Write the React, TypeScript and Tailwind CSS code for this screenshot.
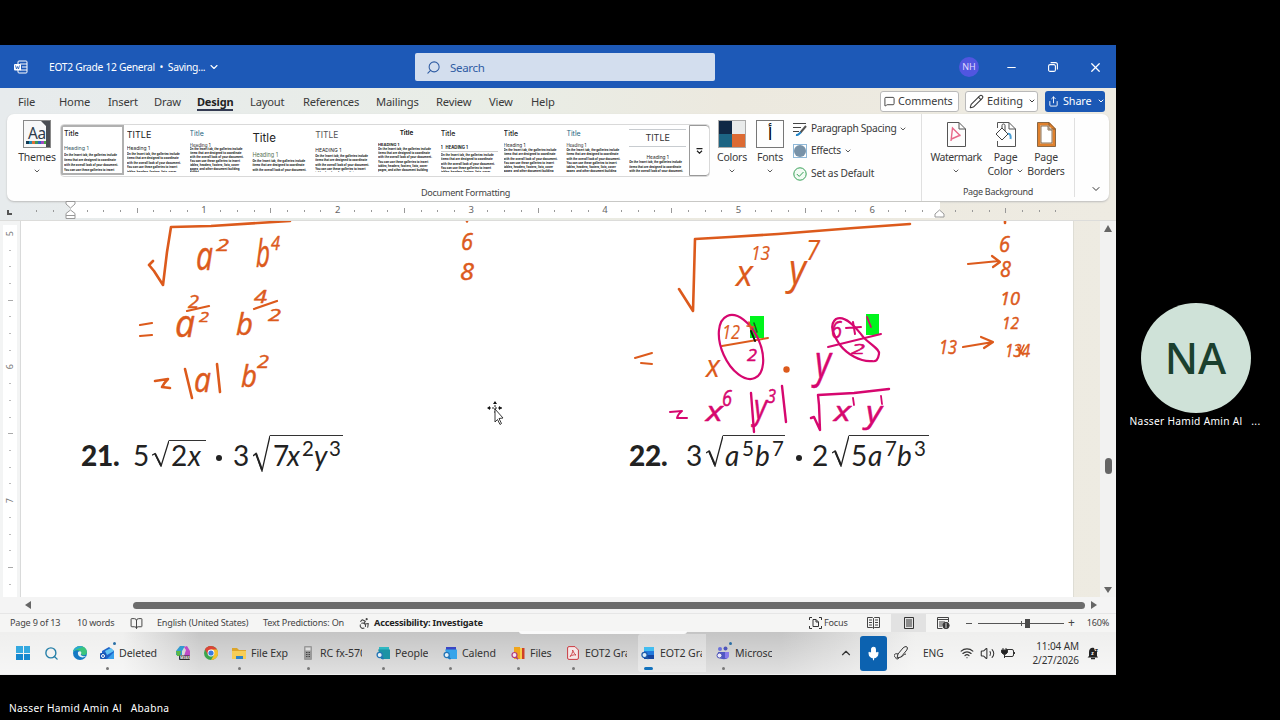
import { ReactNode } from "react"
import {
  Accessibility,
  BookOpen,
  ChevronDown,
  ChevronUp,
  MessageSquare,
  Mic,
  Minus,
  Pencil,
  Search,
  Share,
  Volume2,
  Wifi,
  X,
} from "lucide-react"

const ORANGE = "#dc5a1c"
const PINK = "#d6076f"

const tabs = [
  { label: "File", width: "w-[41px]" },
  { label: "Home", width: "w-[49px]" },
  { label: "Insert", width: "w-[46px]" },
  { label: "Draw", width: "w-[43px]" },
  { label: "Design", width: "w-[53px]" },
  { label: "Layout", width: "w-[53px]" },
  { label: "References", width: "w-[73px]" },
  { label: "Mailings", width: "w-[60px]" },
  { label: "Review", width: "w-[53px]" },
  { label: "View", width: "w-[42px]" },
  { label: "Help", width: "w-[40px]" },
]

const body =
  "On the Insert tab, the galleries include items that are designed to coordinate with the overall look of your document. You can use these galleries to insert tables, headers, footers, lists, cover pages, and other document building blocks."

const styleSets = [
  { title: "Title", titleClass: "text-[7px] font-medium leading-[10px]", heading: "Heading 1", headingClass: "mt-[6px] text-[5.3px] leading-[6px] text-[#35565e]", bodyClass: "mt-[2px] leading-[4.9px]" },
  { title: "TITLE", titleClass: "text-[9px] leading-[11px]", heading: "Heading 1", headingClass: "mt-[6px] text-[5px] leading-[5px]", bodyClass: "mt-px leading-[4.4px]" },
  { title: "Title", titleClass: "text-[7px] leading-[10px] text-[#246580]", heading: "Heading 1", headingClass: "mt-[4px] text-[4.5px] leading-[5px]", bodyClass: "leading-[3.9px]" },
  { title: "Title", titleClass: "mt-[2px] text-[11.5px] leading-[14px]", heading: "Heading 1", headingClass: "mt-[7px] text-[5.5px] leading-[6px] text-[#557050]", bodyClass: "mt-[1px] leading-[4.4px]" },
  { title: "TITLE", titleClass: "mt-px text-[8.5px] leading-[11px] text-[#555]", heading: "HEADING 1", headingClass: "mt-[6px] text-[5px] leading-[6px]", bodyClass: "mt-px leading-[4.3px]" },
  { title: "Title", titleClass: "text-center text-[6.3px] font-bold leading-[9px]", heading: "HEADING 1", headingClass: "mt-[4px] text-[4px] font-bold leading-[5px]", bodyClass: "leading-[4.2px]" },
  { title: "Title", titleClass: "text-[7px] font-medium leading-[10px]", heading: "1   HEADING 1", headingClass: "mt-[5px] border-b border-[#ccc] whitespace-pre text-[4.2px] font-bold leading-[7px]", bodyClass: "mt-px leading-[4.3px]" },
  { title: "Title", titleClass: "text-[7px] font-medium leading-[10px]", heading: "Heading 1", headingClass: "mt-[4px] text-[4.7px] leading-[5px]", bodyClass: "leading-[4.3px]" },
  { title: "Title", titleClass: "text-[7px] leading-[10px] text-[#246580]", heading: "Heading 1", headingClass: "mt-[4px] text-[4.3px] leading-[5px]", bodyClass: "leading-[4.3px]" },
  { title: "TITLE", titleClass: "border-y border-[#c8ccd0] text-center text-[9px] leading-[16px] text-[#333]", heading: "Heading 1", headingClass: "mt-[7px] text-center text-[4.8px] leading-[6px]", bodyClass: "leading-[4.6px]" },
]

function TitleBar() {
  return (
    <div className="flex h-[43px] items-center bg-[#1d59b7] pt-px text-white">
      <svg className="ml-3.5" width="14" height="14" viewBox="0 0 14 14" fill="none" stroke="white">
        <path d="M4 4V2a1 1 0 0 1 1-1h7a1 1 0 0 1 1 1v10a1 1 0 0 1-1 1H5a1 1 0 0 1-1-1v-2M6 4h7M8 7h5M6 10h7" />
        <rect x="0" y="4" width="7" height="6.500" rx="1" fill="white" stroke="none" />
        <path d="M1.500 5.500l1 3.500 1-2.500 1 2.500 1-3.500" stroke="#1d59b7" strokeWidth="0.800" />
      </svg>
      <span className="ml-[21px] w-[156px] shrink-0 whitespace-pre pt-[2px] text-[10.3px] tracking-[-0.31px]">EOT2 Grade 12 General  •  Saving...</span>
      <ChevronDown className="ml-[3px] size-3 shrink-0" strokeWidth={2.2} />
      <div className="ml-[195px] flex h-7 w-[300px] items-center rounded-[2px] bg-[#d3deee] text-[#2f5ca3]">
        <Search className="ml-[11px] size-[15px] -scale-x-100" strokeWidth={1.7} />
        <span className="ml-[9px] pt-px text-[11.5px] tracking-[-0.3px]">Search</span>
      </div>
      <div className="ml-[244px] flex size-5 items-center justify-center rounded-full bg-[#5156e0] text-[9px] text-[#e0dcff]">NH</div>
      <Minus className="ml-[26px] size-[13px]" strokeWidth={2} />
      <svg className="ml-[30px]" width="10" height="10" viewBox="0 0 10 10" fill="none" stroke="white" strokeWidth="1.100">
        <rect x="0.600" y="2.600" width="6.800" height="6.800" rx="1.500" />
        <path d="M2.600 0.600h4.800a2 2 0 0 1 2 2v4.800" />
      </svg>
      <X className="ml-[30px] size-[15px]" strokeWidth={2} />
    </div>
  )
}

function TabRow() {
  return (
    <div className="flex h-[26px] items-center pl-[18px] text-[#3a3a3a]">
      {tabs.map((tab) => (
        <div key={tab.label} className={`${tab.width} pt-[2px] text-[11.2px] tracking-[-0.2px]`}>
          <span
            className={
              tab.label === "Design"
                ? "inline-block border-b-2 border-[#333a52] text-[11px] font-bold leading-[15px] tracking-[-0.2px] text-[#222]"
                : "inline-block border-b-2 border-transparent leading-[15px]"
            }
          >
            {tab.label}
          </span>
        </div>
      ))}
      <div className="ml-[309px] flex h-[21px] w-[79px] items-center rounded-[3px] border border-[#b9b9b9] bg-white pl-[3px] text-[10.8px]">
        <MessageSquare className="size-[11px]" />
        <span className="ml-[3px] tracking-[-0.1px]">Comments</span>
      </div>
      <div className="ml-[6px] flex h-[21px] w-[73px] items-center rounded-[3px] border border-[#b9b9b9] bg-white pl-[3px] text-[11px]">
        <Pencil className="size-[15px]" strokeWidth={1.7} />
        <span className="ml-[3px]">Editing</span>
        <ChevronDown className="ml-[5px] size-2" strokeWidth={3} />
      </div>
      <div className="ml-[7px] flex h-[21px] w-[60px] items-center rounded-[3px] bg-[#1b58b5] pl-[3px] text-[10.8px] text-white">
        <Share className="size-[11px]" />
        <span className="ml-[4px] tracking-[-0.1px]">Share</span>
        <ChevronDown className="ml-[5px] size-2" strokeWidth={3} />
      </div>
    </div>
  )
}

function Gallery() {
  return (
    <div className="mt-[10px] flex h-[53px] w-[650px] overflow-hidden rounded-[4px] border border-[#d9d9d9] bg-white">
      {styleSets.map((s, i) => (
        <div
          key={i}
          className={`h-[50px] w-[62.8px] shrink-0 overflow-hidden px-[3px] pt-[4px] text-[#222] ${
            i === 0 ? "outline-2 -outline-offset-2 outline-[#b0b0b0]" : ""
          } ${i === 9 ? "w-[60px]" : ""}`}
        >
          <div className="h-[43px] w-[57px] overflow-hidden font-[Inter,sans-serif]">
            <div className={s.titleClass}>{s.title}</div>
            <div className={s.headingClass}>{s.heading}</div>
            <div className={`w-[57px] font-[Roboto,sans-serif] text-[3.1px] font-bold ${s.bodyClass}`}>{body}</div>
          </div>
        </div>
      ))}
      <div className="ml-auto flex w-[21px] shrink-0 flex-col items-center justify-center rounded-r-[4px] border border-[#999] bg-white">
        <svg width="7" height="6" viewBox="0 0 7 6" fill="none" stroke="#222" strokeWidth="1.200">
          <path d="M0.500 0.700h6M1 2.800l2.500 2.400L6 2.800" />
        </svg>
      </div>
    </div>
  )
}

function BigButton({ label, sub, chevron, className, children }: { label: string; sub?: string; chevron?: boolean; className: string; children: ReactNode }) {
  return (
    <div className={`flex shrink-0 flex-col items-center text-[10.5px] leading-[14px] tracking-[-0.25px] text-[#3a3a3a] ${className}`}>
      <div className="flex h-[30px] items-center">{children}</div>
      <span className="mt-px">{label}</span>
      <span className="flex h-[14px] items-center gap-[3px]">
        {sub}
        {chevron && <ChevronDown className="size-2" strokeWidth={2.5} />}
      </span>
    </div>
  )
}

function Ribbon() {
  return (
    <div className="relative mx-[7px] flex h-[87px] rounded-[7px] bg-[#fefefe] shadow-[0_1px_2px_#bbb]">
      <BigButton label="Themes" chevron className="ml-[10px] w-[40px] pt-[5px]">
        <svg width="28" height="28" viewBox="0 0 28 28">
          <rect x="0.500" y="0.500" width="27" height="27" fill="#f8f8f8" stroke="#888" />
          <path d="M18 1h9v26h-4V6z" fill="#4a4d52" />
          <text x="5" y="19" fontSize="17" fill="#2d3b4a" textLength="18" lengthAdjust="spacingAndGlyphs">Aa</text>
          <path d="M3 22.500h3" stroke="#123a55" strokeWidth="3" />
          <path d="M6 22.500h3" stroke="#1f8ab0" strokeWidth="3" />
          <path d="M9 22.500h3" stroke="#dd7036" strokeWidth="3" />
          <path d="M12 22.500h3" stroke="#39965c" strokeWidth="3" />
          <path d="M15 22.500h3" stroke="#2f62c0" strokeWidth="3" />
          <path d="M18 22.500h3" stroke="#a04ac0" strokeWidth="3" />
          <path d="M21 22.500h2" stroke="#44a844" strokeWidth="3" />
        </svg>
      </BigButton>
      <div className="ml-[3px] w-[650px]">
        <Gallery />
        <div className="ml-[361px] mt-[10px] text-[9.1px] leading-[12px] tracking-[-0.3px] text-[#444]">Document Formatting</div>
      </div>
      <BigButton label="Colors" chevron className="ml-[4px] w-[36px] pt-[5px]">
        <div className="grid size-7 grid-cols-2 border border-[#aaa]">
          <div className="bg-[#102845]" />
          <div className="bg-[#e9ebeb]" />
          <div className="bg-[#1c6483]" />
          <div className="bg-[#dc6a33]" />
        </div>
      </BigButton>
      <BigButton label="Fonts" chevron className="ml-[3px] w-[34px] pt-[5px]">
        <div className="flex size-7 items-center justify-center border border-[#777] font-['DejaVu_Sans',sans-serif] text-[17px] text-black">أ</div>
      </BigButton>
      <div className="ml-[6px] flex w-[128px] flex-col pt-[3px] text-[10.2px] tracking-[-0.3px] text-[#3a3a3a]">
        <div className="flex h-[23px] items-center">
          <svg width="14" height="14" viewBox="0 0 14 14" fill="none">
            <path d="M0 1.500h13M0 5.500h8M0 9.500h6" stroke="#444" strokeWidth="1.100" />
            <path d="M13 4L7.500 10.500" stroke="#555" strokeWidth="2" />
            <path d="M3 13c3 .5 3-2 5-2.500" stroke="#2083c5" strokeWidth="2" />
          </svg>
          <span className="ml-[4px]">Paragraph Spacing</span>
          <ChevronDown className="ml-[3px] size-2" strokeWidth={2.5} />
        </div>
        <div className="flex h-[22px] items-center">
          <div className="flex size-[14px] items-center justify-center border border-[#8fb8d8]">
            <div className="size-3 rounded-full bg-[#7892a8]" />
          </div>
          <span className="ml-[4px]">Effects</span>
          <ChevronDown className="ml-[3px] size-2" strokeWidth={2.5} />
        </div>
        <div className="flex h-[23px] items-center">
          <svg width="14" height="14" viewBox="0 0 14 14" fill="none" stroke="#37a058">
            <circle cx="7" cy="7" r="6.200" fill="#f2fbf4" />
            <path d="M3.800 7l2.400 2.400L10.500 5" />
          </svg>
          <span className="ml-[4px] tracking-[-0.2px]">Set as Default</span>
        </div>
      </div>
      <div className="flex w-[153px] flex-col border-l border-[#e0e0e0]">
        <div className="flex pl-[8px] pt-[5px]">
          <BigButton label="Watermark" chevron className="w-[52px] tracking-[-0.45px]">
            <svg width="19" height="25" viewBox="0 0 19 25" fill="none">
              <path d="M.5.5H12L18.500 7v17.500H.5zM12 .5V7h6.500" stroke="#555" fill="#fdfdfd" />
              <path d="M4 19L5.500 6l8 8M4.500 17l9-4" stroke="#e8698a" strokeWidth="1.400" />
            </svg>
          </BigButton>
          <BigButton label="Page" sub="Color" chevron className="w-[47px]">
            <svg width="21" height="25" viewBox="0 0 21 25" fill="none">
              <path d="M2.500 6V.5H14L20.500 7v17.500h-18V19M14 .5V7h6.500" stroke="#555" />
              <path d="M7 6l6 6-6 6-6-6zM7 6V3.500c0-2 3-2 3 0V9" stroke="#444" fill="#fff" />
              <path d="M13 12c2.500-1 3 3 2.500 5" stroke="#4b9fd6" strokeWidth="2" />
            </svg>
          </BigButton>
          <BigButton label="Page" sub="Borders" className="w-[34px]">
            <svg width="19" height="25" viewBox="0 0 19 25" fill="none">
              <path d="M2 2h10l5 5v16H2z" stroke="#e0812d" strokeWidth="3" fill="white" />
              <path d="M.5.5H12L18.500 7v17.500H.5zM12 .5V7h6.500M4 4h7v4h4v13H4z" stroke="#705030" strokeWidth="0.800" />
            </svg>
          </BigButton>
        </div>
        <div className="mt-[8px] text-center text-[9px] leading-[12px] tracking-[-0.3px] text-[#444]">Page Background</div>
      </div>
      <div className="mb-1 mt-1 border-l border-[#e0e0e0]" />
      <ChevronDown className="absolute bottom-[6px] right-[7px] size-3 text-[#333]" strokeWidth={2} />
    </div>
  )
}

function Marker({ className }: { className: string }) {
  return (
    <svg className={`absolute ${className}`} width="11" height="18" viewBox="0 0 11 18" fill="white" stroke="#999">
      <path d="M1 .5h9V3L5.500 7 1 3z" />
      <path d="M5.500 9L10 12.500V17.500H1v-5zM1 14.500h9" />
    </svg>
  )
}

function Ruler() {
  const ticks = Array.from({ length: 62 }, (_, i) => i - 2)
  return (
    <div className="relative flex h-[19px] pt-[1px]">
      <div className="flex w-[28.6px] shrink-0 items-center pl-[7px]">
        <div className="mt-[2px] size-[5px] border-b-2 border-l-2 border-[#555]" />
      </div>
      <div className="relative flex h-4 bg-[linear-gradient(90deg,transparent_42px,#fff_42px,#fff_911px,transparent_911px)]">
        {ticks.map((k) => (
          <div key={k} className="flex w-[16.71px] shrink-0 items-center justify-center pt-px text-[9.5px] text-[#666]">
            {k > 0 && k % 8 === 0 && k < 56 ? (
              k / 8
            ) : k === 0 || k === 52 ? null : (
              <div className={k % 4 === 0 ? "h-[5px] w-px bg-[#999]" : "h-[2px] w-px bg-[#999]"} />
            )}
          </div>
        ))}
      </div>
      <Marker className="left-[65px] top-0" />
      <svg className="absolute left-[934px] top-[8px]" width="11" height="10" viewBox="0 0 11 10" fill="white" stroke="#999">
        <path d="M5.500 1L10 5v3H1V5z" />
      </svg>
    </div>
  )
}

function VerticalRuler() {
  const ticks = Array.from({ length: 22 }, (_, i) => i + 1)
  return (
    <div className="flex w-[21px] shrink-0 flex-col items-center overflow-hidden border-r border-[#d9dada] bg-[#f3f4f4] pt-[4px]">
      {[0, ...ticks].map((k) => (
        <div key={k} className="flex h-[16.71px] w-[14px] shrink-0 items-center justify-center bg-white text-[9px] text-[#777]">
          {k % 8 === 0 ? (
            <span className="-rotate-90">{5 + k / 8}</span>
          ) : (
            <div className={k % 4 === 0 ? "h-px w-[5px] bg-[#aaa]" : "h-px w-[2px] bg-[#bbb]"} />
          )}
        </div>
      ))}
    </div>
  )
}

// One pen character. x/y is the lower left corner of its box, w/h its size.
function Pen({ t, x, y, w, h, c = ORANGE, thin }: { t: string; x: number; y: number; w: number; h: number; c?: string; thin?: boolean }) {
  const ratio = t === "b" || t === "y" ? 0.77 : t === "a" || t === "x" ? 0.545 : 0.72
  const size = h / ratio
  return (
    <text
      x={x}
      y={t === "y" ? y - size * 0.23 : y}
      fontSize={size}
      fontStyle="italic"
      fill={c}
      stroke={c}
      strokeWidth={thin ? 0.2 : 0.5}
      textLength={w}
      lengthAdjust="spacingAndGlyphs"
    >
      {t}
    </text>
  )
}

function Ink() {
  return (
    <svg
      className="absolute inset-0 font-['Open_Sans',sans-serif]"
      width="1100"
      height="376"
      viewBox="0 221 1100 376"
      fill="none"
      strokeLinecap="round"
      strokeLinejoin="round"
    >
      <rect x="750" y="316" width="14" height="22" fill="#00f51c" />
      <rect x="866" y="314" width="13" height="21" fill="#00f51c" />
      <g stroke={ORANGE} strokeWidth="2.600">
        <path d="M153 261l-4 4 5 6 9 14 4-33 4-25 40-1 79-5" />
        <path d="M140 325l12-2M140 336l12-1M187 311l22-5M254 309l23-8" strokeWidth="2.200" />
        <path d="M155 381l13-2q-4 4-6 8l8 1M185 369l7 29M217 364l3 28" />
        <path d="M679 289l14 22 1-35 1-37 35-2 48-3 76-6 56-4" />
        <path d="M635 358l17-5M641 363l11 1M722 346l46-8" strokeWidth="2" />
        <path d="M968 264l31-3M992 256l8 6-7 5M963 347l30-5M981 337l12 5-9 6" strokeWidth="2.200" />
        <path d="M1005 221v2M467 221v.5" />
        <path d="M1018 347l5 8M1019 356l5-11" strokeWidth="1.600" />
      </g>
      <circle cx="786.500" cy="369.500" r="3.200" fill={ORANGE} />

      <Pen t="a" x={196} y={270} w={17} h={22} />
      <Pen t="2" x={216} y={251} w={13} h={12} />
      <Pen t="b" x={256} y={267} w={14} h={29} />
      <Pen t="4" x={271} y={250} w={9} h={14} />
      <Pen t="a" x={175} y={337} w={20} h={21} />
      <Pen t="2" x={188} y={308} w={11} h={13} />
      <Pen t="2" x={199} y={322} w={10} h={11} />
      <Pen t="b" x={236} y={335} w={17} h={24} />
      <Pen t="4" x={254} y={303} w={13} h={13} />
      <Pen t="2" x={268} y={321} w={13} h={12} />
      <Pen t="a" x={194} y={392} w={17} h={19} />
      <Pen t="b" x={241} y={387} w={16} h={24} />
      <Pen t="2" x={257} y={368} w={12} h={13} />
      <Pen t="6" x={461} y={250} w={12} h={17} />
      <Pen t="8" x={460} y={280} w={14} h={17} />

      <Pen t="x" x={736} y={286} w={17} h={20} thin />
      <Pen t="13" x={751} y={260} w={19} h={15} thin />
      <Pen t="y" x={789} y={294} w={17} h={32} thin />
      <Pen t="7" x={806} y={260} w={14} h={19} thin />
      <Pen t="x" x={706} y={377} w={14} h={17} thin />
      <Pen t="12" x={722} y={339} w={18} h={15} thin />
      <Pen t="6" x={999} y={252} w={11} h={16} />
      <Pen t="8" x={1000} y={277} w={11} h={16} />
      <Pen t="10" x={1000} y={305} w={20} h={13} />
      <Pen t="12" x={1002} y={329} w={17} h={12} />
      <Pen t="13" x={939} y={354} w={18} h={14} />
      <Pen t="134" x={1005} y={357} w={25} h={13} />

      <g stroke={PINK} strokeWidth="2.400">
        <ellipse cx="741" cy="347" rx="19" ry="34" transform="rotate(-24 741 347)" strokeWidth="2.200" />
        <path d="M836 319c9-4 19 7 28 19 10 9 16 12 15 16-1 6-3 8-7 7-12 1-25-7-32-16-6-9-12-20-4-26z" strokeWidth="2.200" />
        <path d="M828 347l53-13M846 328l15-1M853 322l2 12" strokeWidth="2" />
        <path d="M670 412l12-1q-4 3-5 7l10 0" strokeWidth="2" />
        <path d="M751 393l3 39M782 386l4 36M811 418l3-1 6 13-1-25-1-10 36-2 35-4" />
        <path d="M853 398l1 7M881 396l1 8M867 317l4 10" strokeWidth="1.800" />
      </g>
      <path d="M754 323l3 9" stroke="#17641b" strokeWidth="1.600" />
      <path d="M747 326l7 1M749 322l2 8" stroke={ORANGE} strokeWidth="1.600" />
      <path d="M751 331l4 10" stroke="#181010" strokeWidth="2" />

      <Pen t="2" x={747} y={361} w={10} h={12} c={PINK} />
      <Pen t="y" x={815} y={387} w={16} h={34} c={PINK} />
      <Pen t="6" x={831} y={338} w={11} h={17} c={PINK} />
      <Pen t="2" x={851} y={354} w={14} h={11} c={PINK} />
      <Pen t="x" x={706} y={421} w={17} h={15} c={PINK} />
      <Pen t="6" x={722} y={406} w={10} h={16} c={PINK} />
      <Pen t="y" x={754} y={427} w={13} h={26} c={PINK} />
      <Pen t="3" x={767} y={403} w={9} h={14} c={PINK} />
      <Pen t="x" x={834} y={421} w={17} h={15} c={PINK} />
      <Pen t="y" x={866} y={430} w={16} h={24} c={PINK} />
    </svg>
  )
}

function Root({ sign, bar, children }: { sign: string; bar: string; children: ReactNode }) {
  return (
    <div className={`flex shrink-0 ${sign}`}>
      <svg className="h-full w-[17px] shrink-0" viewBox="0 0 17 32" preserveAspectRatio="none" fill="none" stroke="#222">
        <path d="M0 18l3-2 6 15L17 .7" strokeWidth="1.300" />
        <path d="M3 16l6 14" strokeWidth="2" />
      </svg>
      <div className={`flex items-baseline overflow-visible border-t-[1.5px] border-[#333] ${bar}`}>{children}</div>
    </div>
  )
}

function Sup({ children, className }: { children: ReactNode; className: string }) {
  return <span className={`relative -top-[10px] shrink-0 text-[20.5px] not-italic ${className}`}>{children}</span>
}

function Equations() {
  return (
    <div className="flex h-[44px] pl-[60px] pt-px font-[Lato,sans-serif] text-[28px] leading-[42px] text-[#222]">
      <div className="flex w-[548px] items-start">
        <b className="w-[52px] shrink-0 font-black tracking-[-0.3px]">21.</b>
        <span className="w-[19px] shrink-0">5</span>
        <Root sign="mt-[6px] h-[27px]" bar="w-[37px] leading-[28px] pl-[2px]">
          <span className="w-[17px]">2</span>
          <i>x</i>
        </Root>
        <span className="ml-[10px] mt-[21px] size-[6px] shrink-0 rounded-full bg-[#222]" />
        <span className="ml-[11px] w-[20px] shrink-0">3</span>
        <Root sign="mt-px h-[37px]" bar="w-[73px] leading-[38px] pl-[3px]">
          <span className="w-[14px]">7</span>
          <i className="w-[15px]">x</i>
          <Sup className="w-[12px]">2</Sup>
          <i className="w-[15px]">y</i>
          <Sup className="w-[12px]">3</Sup>
        </Root>
      </div>
      <div className="flex items-start">
        <b className="w-[57px] shrink-0 font-black tracking-[-0.3px]">22.</b>
        <span className="w-[20px] shrink-0">3</span>
        <Root sign="mt-px h-[32px]" bar="w-[62px] leading-[38px] pl-[2px]">
          <i className="w-[17px]">a</i>
          <Sup className="w-[13px]">5</Sup>
          <i className="w-[17px]">b</i>
          <Sup className="w-[12px]">7</Sup>
        </Root>
        <span className="ml-[11px] mt-[21px] size-[6px] shrink-0 rounded-full bg-[#222]" />
        <span className="ml-[10px] w-[20px] shrink-0">2</span>
        <Root sign="mt-px h-[32px]" bar="w-[80px] leading-[38px] pl-[2px]">
          <span className="w-[17px]">5</span>
          <i className="w-[17px]">a</i>
          <Sup className="w-[12px]">7</Sup>
          <i className="w-[17px]">b</i>
          <Sup className="w-[12px]">3</Sup>
        </Root>
      </div>
    </div>
  )
}

function Document() {
  return (
    <div className="relative flex h-[377px] border-t border-[#dcdcda]">
      <VerticalRuler />
      <div className="w-[1053px] shrink-0 border-r border-[#deddd5] bg-white pt-[212px]">
        <Equations />
      </div>
      <div className="flex-1" />
      <div className="flex w-[16px] flex-col items-center justify-between bg-[#f2f2f1] py-[4px]">
        <div className="border-x-4 border-b-[7px] border-transparent border-b-[#666]" />
        <div className="mt-[112px] h-[16px] w-[7px] rounded-full bg-[#666]" />
        <div className="border-x-4 border-t-[6px] border-transparent border-t-[#666]" />
      </div>
      <Ink />
      <svg className="absolute left-[487px] top-[180px]" width="18" height="25" viewBox="0 0 18 25" fill="none" stroke="#222">
        <path d="M8 1v12M2 7h13" strokeDasharray="2 1" />
        <path d="M8 0l2 3H6zM0 7l3-2v4zM15 7l-3-2v4z" fill="#111" stroke="none" />
        <path d="M8 8l8 9-4 .5 2.500 5-1.500 1-2.500-5L8 21z" fill="white" strokeWidth="0.900" />
      </svg>
    </div>
  )
}

function StatusBar() {
  return (
    <div className="flex h-[19px] items-center whitespace-nowrap border-t border-[#e6e6e6] bg-[#f5f5f4] pl-[10px] text-[9.1px] tracking-[-0.2px] text-[#444]">
      <span className="w-[67px]">Page 9 of 13</span>
      <span className="w-[53px]">10 words</span>
      <BookOpen className="size-[13px]" strokeWidth={1.8} />
      <span className="ml-[14px] w-[106px]">English (United States)</span>
      <span className="w-[95px]">Text Predictions: On</span>
      <Accessibility className="size-[13px]" strokeWidth={2} />
      <span className="ml-[3px] w-[435px] text-[9.2px] font-bold text-[#222]">Accessibility: Investigate</span>
      <svg width="13" height="12" viewBox="0 0 13 12" fill="none" stroke="#333">
        <path d="M3 .5H.5V3M10 .5h2.500V3M3 11.500H.5V9M10 11.500h2.500V9M4 2.500h3L9.500 5v4.500H4zM7 2.500V5h2.500" />
      </svg>
      <span className="ml-[2px] w-[43px]">Focus</span>
      <svg width="13" height="12" viewBox="0 0 13 12" fill="none" stroke="#444">
        <path d="M6.500 1.500v10M.5.5h5l1 1 1-1h5v10h-5l-1 1-1-1h-5zM2 3h3M2 5.500h3M2 8h3M8 3h3M8 5.500h3M8 8h3" />
      </svg>
      <div className="ml-[11px] flex h-[18px] w-[35px] items-center justify-center bg-[#e2e2e2]">
        <svg width="10" height="12" viewBox="0 0 10 12" fill="none" stroke="#333">
          <path d="M.5.5h9v11h-9zM2 3h6M2 5h6M2 7h6M2 9h6" />
        </svg>
      </div>
      <svg className="ml-[11px]" width="13" height="12" viewBox="0 0 13 12" fill="none" stroke="#444">
        <path d="M11.500 5V.5H.5v11h5M.5 2.500h11M2 5h6M2 7h4M2 9h3" />
        <circle cx="9" cy="8.500" r="3.200" fill="#333" />
        <path d="M9 6v5" stroke="#ddd" />
      </svg>
      <div className="ml-[16px] h-px w-[6px] bg-[#555]" />
      <div className="ml-[6px] flex w-[86px] items-center">
        <div className="h-px w-[43px] bg-[#555]" />
        <div className="h-[5px] w-px bg-[#555]" />
        <div className="h-px w-[3px] bg-[#555]" />
        <div className="h-[9px] w-[5px] bg-[#4a4a4a]" />
        <div className="h-px flex-1 bg-[#555]" />
      </div>
      <span className="ml-[4px] text-[12px] leading-none">+</span>
      <span className="ml-auto pr-[7px]">160%</span>
    </div>
  )
}

function TaskItem({ label, width, active, dot = true, badge, children }: { label?: string; width: string; active?: boolean; dot?: boolean; badge?: boolean; children: ReactNode }) {
  return (
    <div
      className={`relative flex h-[38px] shrink-0 items-center ${width} ${
        active ? "-ml-[3px] rounded-[3px] bg-[linear-gradient(90deg,#fff5_68px,transparent_68px)] pl-[3px]" : ""
      }`}
    >
      <div className="relative flex h-full w-[14px] items-center justify-center">
        {children}
        {badge && <div className="absolute -right-[2px] top-[8px] size-[3px] rounded-full bg-[#2b6fa5]" />}
        {dot && <div className={`absolute bottom-[2px] rounded-full ${active ? "h-[3px] w-[9px] bg-[#1272bd]" : "size-[3px] bg-[#777]"}`} />}
      </div>
      {label && <div className="ml-[5px] max-w-[42px] overflow-hidden whitespace-nowrap pt-px text-[10.6px] tracking-[-0.1px] text-[#333]">{label}</div>}
    </div>
  )
}

function AppGlyph({ main, accent }: { main: string; accent: string }) {
  return (
    <svg width="14" height="14" viewBox="0 0 14 14" fill="none">
      <path d="M3 1h10v3H3z" fill={accent} />
      <path d="M2 3.500h12V13H5z" fill={main} />
      <circle cx="3.700" cy="9" r="2.600" fill="#e4f1f8" stroke="#2374b5" strokeWidth="1.300" />
      <path d="M5.500 11l2 2.300" stroke="#2374b5" strokeWidth="1.500" />
    </svg>
  )
}

function Taskbar() {
  return (
    <div className="flex h-[43px] items-center border-b border-[#eee] bg-[linear-gradient(180deg,#0000_0%,#fff7_100%),linear-gradient(90deg,#efefee_0%,#efefee_11%,#c5c5c5_18%,#c5c5c5_70%,#efefee_82%)] pl-[16px] text-[#333]">
      <TaskItem width="w-[28px]" dot={false}>
        <div className="grid size-[14px] grid-cols-2 gap-px">
          <div className="bg-[#35a9e0]" />
          <div className="bg-[#35a9e0]" />
          <div className="bg-[#1687ce]" />
          <div className="bg-[#1687ce]" />
        </div>
      </TaskItem>
      <TaskItem width="w-[29px]" dot={false}>
        <Search className="size-[15px] shrink-0 text-[#257fa8]" strokeWidth={2.2} />
      </TaskItem>
      <TaskItem width="w-[27px]" dot={false}>
        <svg width="14" height="14" viewBox="0 0 14 14">
          <circle cx="7" cy="7" r="7" fill="#1479c4" />
          <path d="M0 6C1-1 13-2 14 6c0 4-5 4-6 2 1-4-5-5-8-2z" fill="#3cc47c" />
          <path d="M0 6C1 1 7-1 10 1 6 2 3 3 0 6z" fill="#2aa9d8" />
          <path d="M5 6c3-2 4 1 3 2s2 3 5 2c-3 3-9 1-8-4z" fill="#e6f2f5" />
        </svg>
      </TaskItem>
      <TaskItem width="w-[76px]" label="Deleted" badge>
        <svg width="14" height="14" viewBox="0 0 14 14">
          <path d="M2 5l7-4 5 4v8H2z" fill="#1d63c8" />
          <path d="M5 5l6-3 3 3-7 4z" fill="#62c4f3" />
          <path d="M7 13l7-7v7z" fill="#38a0eb" />
          <rect x="0" y="7" width="6" height="6" rx="1" fill="#1757b5" />
          <circle cx="3" cy="10" r="1.500" fill="none" stroke="white" />
        </svg>
      </TaskItem>
      <TaskItem width="w-[28px]" dot={false}>
        <svg width="14" height="14" viewBox="0 0 14 14">
          <path d="M0 9V5l4-5h5L6 5v4z" fill="#319bd0" />
          <path d="M0 5h5L4 10H1z" fill="#5cb845" />
          <path d="M8 1l3-1 3 5v5H8L10 4z" fill="#bd4ac6" />
          <rect x="3" y="9.500" width="11" height="4.500" rx="1" fill="#292929" />
          <text x="4" y="13.200" fontSize="3.800" fill="white" fontWeight="700">M365</text>
        </svg>
      </TaskItem>
      <TaskItem width="w-[28px]" dot={false}>
        <svg width="14" height="14" viewBox="0 0 14 14">
          <circle cx="7" cy="7" r="7" fill="#3ca64d" />
          <path d="M7 7L1 3.500A7 7 0 0 1 13 3.500z" fill="#db4437" />
          <path d="M7 3.500h6.100A7 7 0 0 1 7 14l3-5z" fill="#f5c02a" />
          <path d="M1 3.500A7 7 0 0 1 7 0v4L4 9z" fill="#db4437" />
          <circle cx="7" cy="7" r="3.400" fill="white" />
          <circle cx="7" cy="7" r="2.600" fill="#3a7be0" />
        </svg>
      </TaskItem>
      <TaskItem width="w-[69px]" label="File Exp">
        <svg width="14" height="13" viewBox="0 0 14 13">
          <path d="M0 1h5l2 2h7v9H0z" fill="#dca52b" />
          <path d="M0 4h14v8H0z" fill="#f6cd56" />
          <path d="M4 9h7v3H4z" fill="#2c83c8" />
        </svg>
      </TaskItem>
      <TaskItem width="w-[75px]" label="RC fx-570">
        <svg width="8" height="14" viewBox="0 0 8 14">
          <rect width="8" height="14" rx="1" fill="#999" />
          <rect x="1.500" y="1.500" width="5" height="3" fill="#ddd" />
          <path d="M2 6.500h4M2 8.500h4M2 10.500h4" stroke="#444" strokeDasharray="1 .5" />
        </svg>
      </TaskItem>
      <TaskItem width="w-[67px]" label="People">
        <AppGlyph main="#1b93a5" accent="#30b8c2" />
      </TaskItem>
      <TaskItem width="w-[68px]" label="Calend">
        <AppGlyph main="#36a4ea" accent="#3a46c4" />
      </TaskItem>
      <TaskItem width="w-[55px]" label="Files">
        <svg width="14" height="14" viewBox="0 0 14 14" fill="none">
          <path d="M3 1h6v12H3z" fill="#f0a51c" />
          <path d="M9 2h2v11H9z" fill="#f7cc4b" />
          <path d="M11 2h2.500v11H11z" fill="#cf4026" />
          <circle cx="3.500" cy="9" r="2.500" fill="#f7e6ef" stroke="#b03a80" strokeWidth="1.200" />
          <path d="M5 11l2 2.300" stroke="#b03a80" strokeWidth="1.400" />
        </svg>
      </TaskItem>
      <TaskItem width="w-[75px]" label="EOT2 Grade">
        <svg width="12" height="14" viewBox="0 0 12 14" fill="none" stroke="#c93b42">
          <path d="M.6 2Q.6.6 2 .6h6l3.400 3.400v8q0 1.400-1.400 1.400H2Q.6 13.400.6 12z" fill="#f6e6e6" />
          <path d="M3 10.500C5 8 6 6 5.600 4 7 7 7.500 8 9 9 7 8.500 5 9 3 10.500z" strokeWidth="0.900" />
        </svg>
      </TaskItem>
      <TaskItem width="w-[78px]" label="EOT2 Grade" active>
        <svg width="14" height="14" viewBox="0 0 14 14" fill="none">
          <path d="M3 1h10v4H3z" fill="#43bdf0" />
          <path d="M3 5h10v4H3z" fill="#2379dc" />
          <path d="M3 9h10v4H3z" fill="#1545a0" />
          <circle cx="3.500" cy="9" r="2.600" fill="#dbeefa" stroke="#1e5aa8" strokeWidth="1.200" />
          <path d="M5.500 11l2 2" stroke="#1e5aa8" strokeWidth="1.500" />
        </svg>
      </TaskItem>
      <TaskItem width="w-[123px]" label="Microsc" badge>
        <svg width="14" height="14" viewBox="0 0 14 14" fill="none">
          <circle cx="4" cy="3" r="2" fill="#6a70dc" />
          <circle cx="9.500" cy="2.500" r="2" fill="#4d54bb" />
          <path d="M2 6h10v5c0 3-8 3-9 0z" fill="#5158c4" />
          <path d="M9 6h4v4c0 2-2 3-4 2z" fill="#8a7cea" />
          <circle cx="3.500" cy="9.500" r="2.500" fill="#ecebfa" stroke="#4b52b5" />
        </svg>
      </TaskItem>
      <ChevronUp className="size-[14px]" strokeWidth={2} />
      <div className="ml-[7px] flex h-[35px] w-[27px] items-center justify-center rounded-[3px] bg-[#0c62b0] text-white">
        <Mic className="size-[15px] fill-white" strokeWidth={1.8} />
      </div>
      <svg className="ml-[7px]" width="14" height="14" viewBox="0 0 14 14" fill="none" stroke="#333">
        <path d="M13 1c-1-1-3 0-4 1L4 8l-1 4 4-1 5-6c1-1 2-3 1-4zM4 8c-3-1-5 1-3 3s1 3 4 1" />
        <path d="M7 11c2-1 3-3 5-3" />
      </svg>
      <span className="ml-[15px] w-[37px] pt-px text-[10.2px] tracking-[-0.1px]">ENG</span>
      <Wifi className="size-[14px]" strokeWidth={2} />
      <Volume2 className="ml-[6px] size-[15px]" strokeWidth={1.7} />
      <svg className="ml-[6px]" width="14" height="12" viewBox="0 0 14 12" fill="none" stroke="#333">
        <path d="M5 2.500h6q1.500 0 1.500 1.500v4q0 1.500-1.500 1.500H3.500M13.500 5v2" />
        <path d="M2 1v2M5 1v2M.5 3h6v2.500q-3 4-6 0zM3.500 7v4" fill="#222" />
      </svg>
      <div className="ml-auto text-right text-[10px] leading-[14px] tracking-[-0.1px]">
        <div>11:04 AM</div>
        <div>2/27/2026</div>
      </div>
      <svg className="ml-[8px] mr-[17px]" width="12" height="14" viewBox="0 0 12 14">
        <path d="M2 10V6c0-4 3-5 5-4l1 3h2v5l1 1.500H.500z" fill="#222" />
        <path d="M4 12.500h4" stroke="#222" strokeWidth="1.500" />
        <text x="8" y="5.500" fontSize="6" fontWeight="700" fill="#222">z</text>
        <text x="4.300" y="9" fontSize="5" fontWeight="700" fill="#fff">z</text>
      </svg>
    </div>
  )
}

export default function App() {
  return (
    <main className="flex h-[720px] w-[1280px] overflow-hidden bg-black font-['Noto_Sans','Open_Sans',sans-serif]">
      <div className="flex w-[1116px] shrink-0 flex-col pt-[45px]">
        <div className="h-[630px] overflow-hidden bg-[linear-gradient(90deg,#e7ebed_0%,#e9ede6_45%,#ece9df_65%,#eeebe2_100%)]">
          <TitleBar />
          <TabRow />
          <Ribbon />
          <Ruler />
          <Document />
          <div className="flex h-4 items-center bg-[#f4f4f4] pl-[25px]">
            <div className="border-y-4 border-r-[6px] border-transparent border-r-[#666]" />
            <div className="ml-[102px] h-[7px] w-[952px] rounded-full bg-[#6c6c6c]" />
            <div className="ml-[6px] border-y-4 border-l-[6px] border-transparent border-l-[#666]" />
          </div>
          <div className="relative">
            <StatusBar />
            <div className="absolute left-[519px] top-[18px] h-[3px] w-[168px] rounded-b-[4px] bg-[#fafafa]" />
          </div>
          <Taskbar />
        </div>
        <div className="ml-[9px] mt-[25px] whitespace-pre text-[10.2px] leading-4 tracking-[0.3px] text-white">Nasser Hamid Amin Al   Ababna</div>
      </div>
      <div className="flex flex-1 flex-col items-center pt-[303px]">
        <div className="mr-[5px] flex size-[110px] items-center justify-center rounded-full bg-[#cfe2d8] text-[43px] font-medium text-[#1b402e]">NA</div>
        <div className="mr-[6px] whitespace-pre text-[10.2px] leading-4 tracking-[0.3px] text-white">Nasser Hamid Amin Al   ...</div>
      </div>
    </main>
  )
}
